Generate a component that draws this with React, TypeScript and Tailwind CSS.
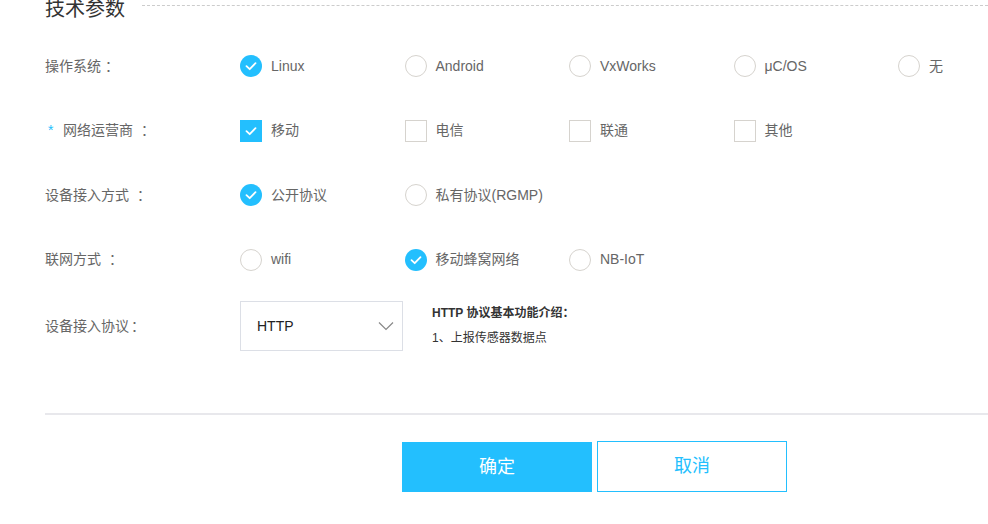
import React, { useState } from 'react';

const BLUE = 'bg-[#23bffe]';

const Check = () => (
  <svg viewBox="0 0 22 22" className="w-[22px] h-[22px] absolute inset-0">
    <path d="M6.5 11.2 L9.7 14.2 L15.5 8.2" fill="none" stroke="white" strokeWidth="1.8" strokeLinecap="round" strokeLinejoin="round" />
  </svg>
);

const Radio = ({ label, checked, onClick }: { label: string; checked: boolean; onClick: () => void }) => (
  <div className="w-[164.5px] shrink-0 flex items-center cursor-pointer" onClick={onClick}>
    <span
      className={
        checked
          ? 'relative w-[22px] h-[22px] rounded-full bg-[#23bffe] shrink-0'
          : 'relative w-[22px] h-[22px] rounded-full border border-[#d6d3ce] bg-white shrink-0'
      }
    >
      {checked && <Check />}
    </span>
    <span className="ml-[9px] text-[14px] text-[#666]">{label}</span>
  </div>
);

const Box = ({ label, checked, onClick }: { label: string; checked: boolean; onClick: () => void }) => (
  <div className="w-[164.5px] shrink-0 flex items-center cursor-pointer" onClick={onClick}>
    <span
      className={
        checked
          ? 'relative w-[22px] h-[22px] bg-[#23bffe] shrink-0'
          : 'relative w-[22px] h-[22px] border border-[#d6d3ce] bg-white shrink-0'
      }
    >
      {checked && <Check />}
    </span>
    <span className="ml-[9px] text-[14px] text-[#666]">{label}</span>
  </div>
);

const Label = ({ text, gap = 4 }: { text: string; gap?: number }) => (
  <div className="w-[195px] shrink-0 flex items-center text-[14px] text-[#666]">
    {text}
    <span className={gap === 4 ? 'ml-[4px]' : 'ml-[8px]'}>：</span>
  </div>
);

const App: React.FC = () => {
  const [os, setOs] = useState('Linux');
  const [isp, setIsp] = useState<string[]>(['移动']);
  const [access, setAccess] = useState('公开协议');
  const [net, setNet] = useState('移动蜂窝网络');

  const toggleIsp = (v: string) =>
    setIsp(isp.includes(v) ? isp.filter((x) => x !== v) : [...isp, v]);

  return (
    <div className="w-[988px] h-[524px] overflow-hidden bg-white font-['Liberation_Sans','Noto_Sans_CJK_SC',sans-serif]">
      {/* title */}
      <div className="flex items-start pl-[45px] -mt-[3px] h-[37px]">
        <h2 className="text-[20px] leading-[24px] text-[#333]">技术参数</h2>
        <div className="flex-1 ml-[17px] mt-[8px] border-t border-dashed border-[#ccc]"></div>
      </div>

      <div className="pl-[45px]">
        {/* OS */}
        <div className="flex items-center h-[64.5px]">
          <Label text="操作系统" />
          {['Linux', 'Android', 'VxWorks', 'μC/OS', '无'].map((o) => (
            <Radio key={o} label={o} checked={os === o} onClick={() => setOs(o)} />
          ))}
        </div>

        {/* ISP */}
        <div className="flex items-center h-[64.5px]">
          <div className="w-[195px] shrink-0 text-[14px] text-[#666] flex items-center">
            <span className="text-[#23bffe] w-[18px] pl-[3px]">*</span>网络运营商
            <span className="ml-[8px]">：</span>
          </div>
          {['移动', '电信', '联通', '其他'].map((o) => (
            <Box key={o} label={o} checked={isp.includes(o)} onClick={() => toggleIsp(o)} />
          ))}
        </div>

        {/* access */}
        <div className="flex items-center h-[64.5px]">
          <Label text="设备接入方式" gap={8} />
          {['公开协议', '私有协议(RGMP)'].map((o) => (
            <Radio key={o} label={o} checked={access === o} onClick={() => setAccess(o)} />
          ))}
        </div>

        {/* network */}
        <div className="flex items-center h-[64.5px]">
          <Label text="联网方式" gap={8} />
          {['wifi', '移动蜂窝网络', 'NB-IoT'].map((o) => (
            <Radio key={o} label={o} checked={net === o} onClick={() => setNet(o)} />
          ))}
        </div>

        {/* protocol */}
        <div className="flex items-start pt-[9px]">
          <div className="w-[195px] h-[50px] shrink-0 flex items-center text-[14px] text-[#666]">
            设备接入协议<span className="ml-[2px]">：</span>
          </div>
          <div className="w-[163px] h-[50px] border border-[#dcdfe6] flex items-center justify-between pl-[16px] pr-[8px]">
            <span className="text-[14px] text-[#222]">HTTP</span>
            <svg viewBox="0 0 16 10" className="w-[16px] h-[10px]">
              <path d="M1 1.5 L8 8.5 L15 1.5" fill="none" stroke="#888" strokeWidth="1.2" />
            </svg>
          </div>
          <div className="ml-[29px] pt-[4px] text-[12px] text-[#333]">
            <div className="font-bold leading-[16px]">HTTP 协议基本功能介绍：</div>
            <div className="mt-[9px] leading-[16px]">1、上报传感器数据点</div>
          </div>
        </div>

        {/* divider */}
        <div className="mt-[62px] h-[2px] bg-[#e8e8ec]"></div>

        {/* buttons */}
        <div className="flex items-start mt-[27px] pl-[357px] gap-[5px]">
          <button className={`w-[190px] h-[50px] ${BLUE} text-white text-[18px]`}>确定</button>
          <button className="w-[190px] h-[51px] -mt-[1px] border border-[#23bffe] bg-white text-[#23bffe] text-[18px]">取消</button>
        </div>
      </div>
    </div>
  );
};

export default App;
